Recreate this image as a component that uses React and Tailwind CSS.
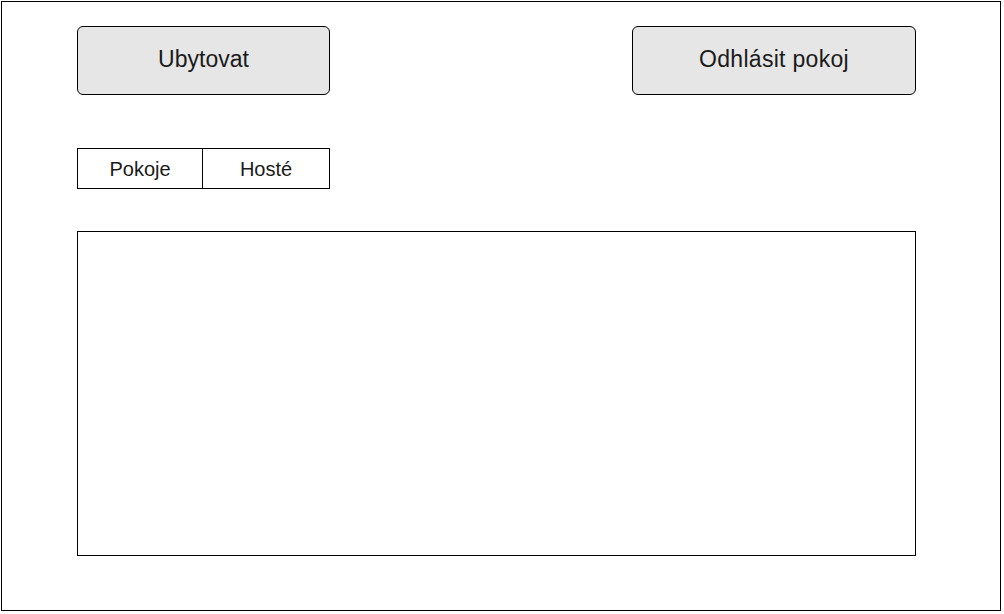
import React from "react";

const font = { fontFamily: '"Liberation Sans", Arial, sans-serif' };

export default function App() {
  return (
    <div className="w-[1004px] h-[614px] bg-white pt-[1px] pl-[1px]" style={font}>
      <div className="w-[1000px] h-[610px] border border-black pl-[75px] pr-[84px] pt-[24px] flex flex-col">
        {/* top buttons */}
        <div className="flex justify-between">
          <button className="w-[253px] h-[69px] bg-[#e6e6e6] border border-black rounded-[6px] text-[23px] text-[#1a1a1a] pb-[2px]">
            Ubytovat
          </button>
          <button className="w-[284px] h-[69px] bg-[#e6e6e6] border border-black rounded-[6px] text-[23px] text-[#1a1a1a] tracking-[0.3px] pb-[2px]">
            Odhlásit pokoj
          </button>
        </div>

        {/* tabs */}
        <div className="mt-[53px] flex w-[253px] h-[41px] border border-black">
          <div className="w-[125px] flex items-center justify-center border-r border-black text-[20px] text-[#1a1a1a]">
            Pokoje
          </div>
          <div className="flex-1 flex items-center justify-center text-[20px] text-[#1a1a1a]">
            Hosté
          </div>
        </div>

        {/* content area */}
        <div className="mt-[42px] w-[839px] h-[325px] border border-black"></div>
      </div>
    </div>
  );
}
